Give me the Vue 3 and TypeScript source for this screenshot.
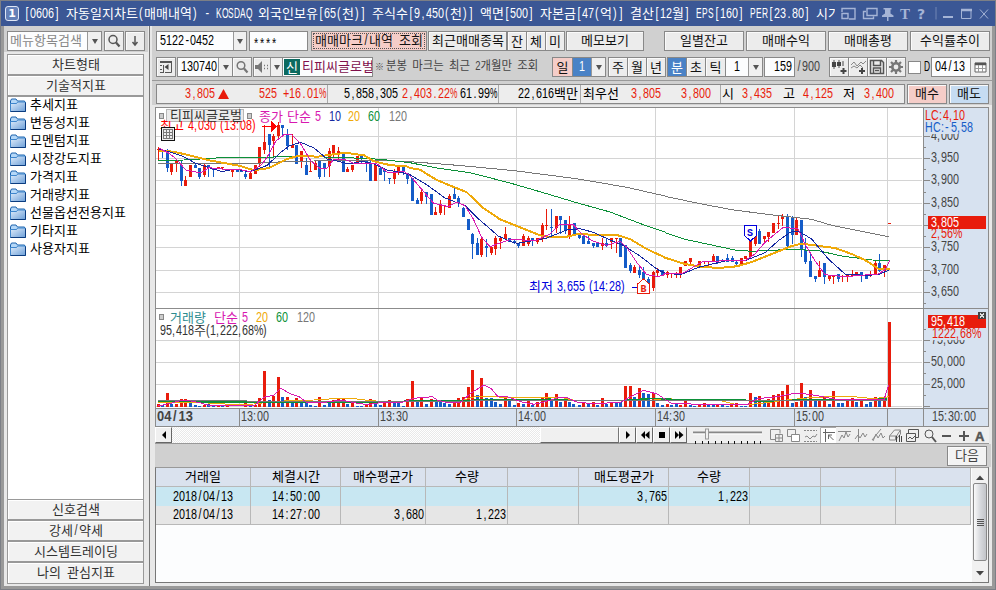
<script setup lang="ts">
import { h } from 'vue'

/* Fixed-cell text: Hangul takes a 12px cell, everything else 6px (4px for punctuation in `p` mode). */
interface CellTextProps { t: string; p?: boolean; z?: number; b?: boolean }
const isHangul = (c: string) => /[\uac00-\ud7a3]/.test(c)
function T(props: CellTextProps) {
  const runs: { k: string; s: string; x: number[] }[] = []
  let pen = 0
  for (const c of props.t) {
    const k = isHangul(c) ? 'ko' : /[A-Z%]/.test(c) ? 'up' : 'nu'
    let run = runs[runs.length - 1]
    if (!run || run.k !== k) {
      run = { k, s: '', x: [] }
      runs.push(run)
    }
    run.s += c
    /* narrow punctuation sits in the middle of its cell */
    const inset = props.p ? 0 : /[,.:/\[\]-]/.test(c) ? 1.4 : /[()]/.test(c) ? 1 : 0
    run.x.push(pen + inset)
    pen += k === 'ko' ? 12 : props.p ? (/[,.:() ]/.test(c) ? 4 : c === '%' ? 9 : /[CH]/.test(c) ? 8 : 6) : 6
  }
  const z = props.z ?? 1
  const squeeze: Record<string, number> = { ko: 1, nu: 0.77, up: props.p ? 0.76 : 0.6 }
  return h('svg', { class: 'tx', width: Math.ceil(pen * z), height: 16 }, [
    h('g', { transform: `scale(${z} ${z === 1 ? 1 : 0.95})` }, runs.map(r =>
      h('text', {
        class: r.k,
        y: 12,
        'xml:space': 'preserve',
        'font-weight': props.b ? 700 : 400,
        transform: `scale(${squeeze[r.k]} 1)`,
        x: r.x.map(v => (v / squeeze[r.k]).toFixed(2)).join(' '),
      }, r.s))),
  ])
}
T.props = { t: String, p: Boolean, z: Number, b: Boolean }

const folders = ['추세지표', '변동성지표', '모멘텀지표', '시장강도지표', '가격지표', '거래량지표', '선물옵션전용지표', '기타지표', '사용자지표']
const bottomMenus = ['신호검색', '강세/약세', '시스템트레이딩', '나의 관심지표']

const quote: { t: string; c?: string }[] = [
  { t: '3,805', c: 'red' }, { t: '▲', c: 'red up-mark' }, { t: '525', c: 'red' }, { t: '+16.01%', c: 'red' }, { t: '', c: 'sep' },
  { t: '5,858,305' }, { t: '2,403.22%', c: 'red' }, { t: '61.99%' }, { t: '', c: 'sep' },
  { t: '22,616백만' }, { t: '', c: 'sep' }, { t: '최우선' }, { t: '3,805', c: 'red' }, { t: '3,800', c: 'red' }, { t: '', c: 'sep' },
  { t: '시' }, { t: '3,435', c: 'red' }, { t: '고' }, { t: '4,125', c: 'red' }, { t: '저' }, { t: '3,400', c: 'red' },
]

/* Candles: x,high,bodyTop,bodyBottom,low,direction in third-pixels, one block per session segment. */
const segA = '14,129,135,137,169,r 26,134,137,143,163,b 40,134,140,191,204,b 53,177,177,203,213,r 67,167,167,181,205,r 82,169,183,230,245,b 95,217,228,245,245,r 109,183,183,218,218,r 125,177,183,191,191,b 137,191,193,218,225,b 152,181,182,213,218,r 163,182,182,191,218,b 178,196,196,198,219,b 194,188,189,196,196,r 206,190,190,193,196,r 236,194,194,203,219,r 250,196,196,203,203,b 262,202,202,204,204,b 274,201,209,218,224,b 290,205,208,225,225,r 304,182,184,211,211,r 317,128,129,180,190,r 331,62,114,138,151,r 346,89,91,124,191,b 358,89,96,110,158,r 373,53,62,97,103,r 385,62,63,72,98,b 400,75,90,126,137,b 415,89,124,132,132,r 427,123,123,180,180,b 442,141,142,171,192,r 457,162,183,213,213,b 470,174,201,203,203,r 484,168,178,197,197,r 496,167,168,219,224,b 511,177,177,191,220,b 526,132,141,185,219,r 538,122,123,152,163,r 553,130,141,153,171,r 568,150,150,204,204,b 580,189,195,204,204,r 595,182,183,197,204,r 610,156,156,180,180,r 622,150,150,166,180,b 637,168,171,180,205,b 650,170,177,230,230,b 664,182,182,230,230,r 679,190,191,212,213,b 691,195,195,204,230,b 706,222,222,225,240,b 721,195,201,225,240,r 733,190,190,200,213,r 748,189,189,203,212,b 760,206,207,224,240,b 775,222,222,291,291,b'
const segB = '22,282,289,299,299,b 35,256,263,291,299,r 49,264,264,280,299,b 64,270,270,332,332,b 76,309,323,332,332,r 91,288,301,328,332,r 103,303,303,305,332,r 118,270,276,311,312,r 133,249,270,284,284,b 145,276,282,298,310,b 160,309,311,340,340,b 175,345,345,378,378,b 187,387,390,420,465,b 202,402,417,453,453,b 214,397,404,453,459,r 229,405,426,431,459,b 244,429,430,447,452,r 256,397,402,435,453,r 271,397,402,411,435,r 286,368,390,405,405,r 298,402,402,414,414,b 313,408,411,417,420,b 325,417,418,426,431,b 340,390,396,426,426,r 355,396,402,420,426,r 367,402,402,412,426,b 382,402,402,413,419,r 397,357,363,405,413,r 409,315,363,366,378,r 424,315,369,371,398,b 439,336,336,372,386,r 452,336,336,349,389,b 466,348,348,378,390,b 478,336,360,398,405,r 493,357,357,390,390,b 508,390,390,402,404,b 520,396,396,419,419,b 535,396,411,420,420,b 550,417,417,425,432,b 562,417,417,430,430,b 577,402,416,426,438,r 589,402,416,425,430,b 604,402,402,413,435,r 619,402,403,406,447,r 631,402,402,458,458,b 646,423,423,491,491,b 661,477,483,501,506,b 673,483,489,506,506,r 688,486,498,512,522,b 700,490,504,540,540,b 715,520,525,540,540,b 730,500,504,551,560,r 742,492,498,507,515,r 757,498,498,512,512,b 772,500,503,512,522,r'
const segC = '20,506,507,510,522,r 34,505,506,509,523,r 46,489,489,507,522,r 61,471,471,485,485,r 76,462,462,473,480,r 89,482,482,486,486,b 103,471,471,485,485,r 117,471,472,475,480,r 130,472,472,475,485,r 145,450,456,471,471,r 157,456,456,473,480,b 172,465,468,473,473,b 187,450,462,473,473,b 201,457,462,473,473,b 215,467,473,480,490,b 229,462,462,485,485,r 241,456,457,465,465,r 257,411,411,459,465,r 271,397,397,421,425,r 283,375,382,420,420,b 298,396,396,405,415,r 310,383,383,398,413,r 325,357,357,388,388,r 340,336,357,360,375,r 352,330,336,345,367,r 367,330,336,426,437,b 382,336,341,392,419,b 395,341,347,392,392,r 409,347,347,437,458,b 421,402,437,473,480,b 436,446,471,519,519,b 451,516,516,525,533,b 463,471,498,518,518,r 478,477,477,518,540,b 493,512,516,525,530,r 505,512,512,518,540,r 520,510,510,525,533,b 532,513,516,519,535,r 547,513,513,518,533,r 562,498,512,516,516,r 574,504,504,513,516,r 589,504,504,516,535,b 604,512,512,525,525,b 617,500,509,515,519,r 631,471,477,510,510,r 643,450,477,501,505,b 658,482,482,501,519,r 673,357,357,360,360,r'

interface Candle { x: number; hi: number; lo: number; top: number; ht: number; c: string }
function parseCandles(src: string, ox: number): Candle[] {
  return src.split(' ').map(s => {
    const f = s.split(',')
    const n = f.slice(0, 5).map(Number)
    const y = (v: number) => Math.round(104 + v / 3)
    return { x: Math.floor(ox + n[0] / 3), hi: y(n[1]), lo: y(n[4]), top: y(n[2]), ht: Math.max(1, y(n[3]) - y(n[2])), c: f[5] }
  })
}
const candles = [...parseCandles(segA, 154), ...parseCandles(segB, 410), ...parseCandles(segC, 665)]

const volA = '14,312r 26,314b 40,279r 53,311b 67,311r 82,297r 95,297r 109,309b 124,315b 137,318b 152,315r 163,312b 178,315b 194,317r 206,317b 220,318r 274,310r 290,316b 304,316r 317,294r 331,213r 346,300b 358,288r 373,231r 385,291b 400,291r 415,308b 427,294r 442,303b 457,309b 470,315b 484,318b 496,291r 511,315b 526,309b 538,300r 553,297r 568,296r 580,312b 595,308r 610,318b 622,318b 637,315r 650,297r 664,309b 679,315b 691,310r 706,300r 721,308b 733,308b 748,318b 760,297r 775,243r 790,305b 802,291r 817,312b 832,297r 847,300b 859,305b 871,309b 886,312b 901,309r 913,294r 928,291r 943,261r 955,210r 970,285b 982,234r 997,294b 1012,294b 1025,306b 1040,312b 1054,288r 1066,303b 1081,315b 1093,309r 1108,312b 1123,302r 1135,315b 1150,306r 1165,294r 1177,279r 1192,297b 1207,282r 1219,305b 1234,291r 1247,305b 1259,312b'
const volB = '16,315b 29,308r 43,310b 58,306r 70,315b 85,294r 97,312b 112,308r 127,308b 139,305b 154,258r 169,258r 181,291b 196,264r 208,279b 223,282b 238,279r 250,309b 265,315b 280,312r 292,315b 307,312b 319,315r 334,303r 349,315b 362,318b 376,315r 391,309r 403,315b 418,316b 431,313r 446,316b 460,318b 473,312r 487,310r 502,318b 514,318b 529,279r 544,291b 556,288r 571,303b 583,297r 598,285r 613,282r 625,273r 640,255r 655,309b 667,306r 682,249r 694,291b 709,270r 724,303b 736,297r 751,288r 766,312b 778,273r 793,309b 805,309b 820,303r 835,294r 847,306b 862,303r 877,312b 889,306b 904,291r 916,302b 931,300r 946,66r'
function parseVolume(src: string, ox: number) {
  return src.split(' ').map(s => {
    const [a, b] = s.split(',')
    const y = Math.round(300 + parseInt(b) / 3)
    return { x: Math.floor(ox + Number(a) / 3) - 1, y, ht: 407 - y, c: b.slice(-1) }
  })
}
const volumes = [...parseVolume(volA, 154), ...parseVolume(volB, 574)]

function line(oy: number, ...parts: [number, string][]): string {
  return parts.map(([ox, s]) => s.split(' ').map(p => {
    const [a, b] = p.split(',').map(Number)
    return `${(ox + a / 3).toFixed(1)},${(oy + b / 3).toFixed(1)}`
  }).join(' ')).join(' ')
}
const priceLines = [
  { c: 'ma120', d: line(104, [154, '12,178 60,180 90,178 300,178 390,173 480,171 640,169 760,172'], [410, '0,173 120,182 220,191 320,201 500,224 650,250 765,276'], [665, '0,277 100,298 200,317 330,334 440,346 500,364 600,384 672,398']) },
  { c: 'ma60', d: line(104, [154, '12,169 90,168 200,161 300,162 400,157 480,158 600,162 680,166 730,172'], [410, '0,176 80,192 180,206 300,237 400,266 500,296 600,324 700,362 765,384'], [665, '0,386 60,406 210,438 260,442 380,436 460,440 530,456 620,468 672,469']) },
  { c: 'ma20', d: line(104, [154, '14,140 60,143 110,155 165,169 255,185 300,199 345,192 400,165 435,155 490,158 530,152 575,146 630,154 660,172 710,184 755,186'], [410, '0,192 30,197 80,228 170,265 220,312 270,346 330,370 390,394 410,398 470,398 500,391 620,393 660,405 710,435 760,458'], [665, '0,461 60,480 110,488 160,492 215,487 260,474 320,450 380,426 410,419 510,432 560,450 600,468 640,494 675,494']) },
  { c: 'ma10', d: line(104, [154, '14,135 50,145 85,156 125,178 165,191 205,203 240,195 285,203 305,197 340,184 380,145 405,126 440,115 480,132 520,165 545,170 585,180 625,172 660,180 700,198 740,205'], [410, '0,212 50,242 105,282 165,305 200,340 265,396 300,412 320,418 370,410 410,402 470,378 510,374 550,385 600,408 640,424 690,456 740,495 765,508'], [665, '0,509 50,511 100,490 180,471 240,470 300,446 340,410 380,382 405,384 440,405 490,465 540,510 600,514 640,512 672,498']) },
  { c: 'ma5', d: line(104, [154, '14,132 45,148 67,165 95,198 140,207 165,191 205,195 250,195 290,203 325,180 345,150 365,112 390,92 410,90 440,120 470,170 500,195 520,192 540,165 570,165 600,178 640,178 670,180 700,205 725,205 750,202'], [410, '0,215 30,250 70,297 115,308 140,294 165,305 190,345 215,400 240,428 275,415 300,407 340,408 380,408 420,390 450,360 490,362 515,390 550,412 590,424 630,412 650,430 680,475 710,512 740,517 760,515'], [665, '0,507 50,510 110,474 180,470 240,470 270,450 300,415 355,370 400,375 420,420 450,470 480,512 540,518 600,513 640,510 660,497 674,469']) },
]
const volumeLines = [
  { c: 'v20', d: line(300, [154, '12,309 140,307 170,310 230,313 300,312 330,308 400,302 480,300 540,296 600,296 640,301 700,306 770,304 860,304 920,302 960,291 1010,289 1060,293 1220,292'], [574, '0,301 240,300 290,296 300,299 440,302 480,312 520,314 570,309 640,300 700,294 760,290 850,291 900,296 945,290']) },
  { c: 'v60', d: line(300, [154, '12,304 230,306 400,307 690,307 770,303 940,303 980,299 1190,298'], [574, '0,302 155,301 240,295 290,298 480,299 540,302 600,302 700,300 850,300 940,297']) },
  { c: 'ma120', d: line(300, [154, '12,302 280,303 330,304 900,305 1000,301'], [574, '0,303 160,301 940,301']) },
  { c: 'ma5', d: line(300, [154, '12,318 50,310 85,300 110,303 140,309 165,316 300,318 330,292 360,285 380,265 410,282 435,290 460,308 500,309 560,300 600,308 640,314 690,306 740,308 780,295 835,290 850,300 880,308 920,306 950,280 990,255 1012,266 1030,288 1060,290 1100,305 1140,313 1170,306 1210,294 1240,293'], [574, '10,307 60,311 140,307 170,290 208,271 250,282 290,309 330,311 420,315 480,314 520,314 550,296 610,290 650,282 690,281 730,287 780,297 850,300 930,299 944,255']) },
]
const gridY = [136.5, 158.5, 180.5, 203.5, 225.5, 247.5, 270.5, 292.5]
const gridX = [239.5, 378.5, 516.5, 655.5, 794.5, 887.5]
const minorY = [147.5, 169.5, 192.5, 214.5, 236.5, 259.5, 281.5, 303.5, 329.5, 351.5, 373.5, 395.5]
const priceLabels = [
  { t: '4,000', y: 127.5 }, { t: '3,950', y: 150 }, { t: '3,900', y: 172 }, { t: '3,850', y: 195 },
  { t: '3,750', y: 239 }, { t: '3,700', y: 262 }, { t: '3,650', y: 284 }, { t: '75,000', y: 332 }, { t: '50,000', y: 354 }, { t: '25,000', y: 376 },
]
const timeLabels = [
  { t: '13:00', x: 241 }, { t: '13:30', x: 380 }, { t: '14:00', x: 518 }, { t: '14:30', x: 657 }, { t: '15:00', x: 796 }, { t: '15:30:00', x: 932 },
]
const tableHead = ['거래일', '체결시간', '매수평균가', '수량', '', '매도평균가', '수량', '', '', '']
const tableRows = [
  ['2018/04/13', '14:50:00', '', '', '', '3,765', '1,223', '', '', ''],
  ['2018/04/13', '14:27:00', '3,680', '1,223', '', '', '', '', '', ''],
]
</script>

<template>
  <div class="window">
    <header class="title">
      <span class="badge">1</span>
      <div class="caption"><T t="[0606] 자동일지차트(매매내역) - KOSDAQ 외국인보유[65(천)] 주식수[9,450(천)] 액면[500] 자본금[47(억)] 결산[12월] EPS[160] PER[23.80] 시가" /></div>
      <svg class="win-icons" width="156" height="26" viewBox="838 1 156 26">
        <g fill="none" stroke="#a5b4d6" stroke-width="1.4">
          <path d="M842 12V8.500h13v10.500h-6M842 13.500h6v5h-6z" />
          <path d="M867 8.500h10v7h-10zM866 11.500h-2.500v7h10v-2" />
          <path d="M936 7v12.500" stroke="#7387b4" stroke-width="1" />
          <path d="M943 17h10" stroke-width="2" />
          <path d="M961.500 10v8.500h9.500V10" stroke-width="1" /><path d="M961 10h11" stroke-width="2.500" />
          <path d="M980 9.500l8 9M988 9.500l-8 9" stroke-width="1" />
        </g>
        <path d="M883.500 8h8v1.500h-1v4l3 2v1.500h-5v4h-1.500v-4h-5v-1.500l3-2v-4h-1.500z" fill="#a5b4d6" />
        <text x="900" y="19" class="glyph-t">T</text>
        <text x="917" y="19" class="glyph-q">?</text>
      </svg>
    </header>

    <div class="body">
      <aside class="side">
        <div class="find">
          <div class="field find-field"><T t="메뉴항목검색" class="muted" /><span class="drop"></span></div>
          <button class="btn sq"><svg width="14" height="14" viewBox="0 0 14 14"><circle cx="6" cy="5.500" r="4" class="ln" /><path d="M9 8.500l3.500 4" class="ln w2" /></svg></button>
          <button class="btn sq"><svg width="10" height="12" viewBox="0 0 10 12"><path d="M5 1v9M2.500 7L5 10l2.500-3" class="ln" /></svg></button>
        </div>
        <div class="acc">
          <div class="acc-head"><T t="차트형태" /></div>
          <div class="acc-head"><T t="기술적지표" /></div>
          <ul class="tree">
            <li v-for="f in folders" :key="f">
              <svg width="16" height="15" viewBox="0 0 16 15">
                <defs><linearGradient id="fold" x1="0" y1="0" x2="1" y2="1"><stop offset="0" stop-color="#e2eefb" /><stop offset="1" stop-color="#6c9fd8" /></linearGradient></defs>
                <path d="M.5 3l1-2h4.500l1.500 2h7v3H.5z" fill="#b5d8f8" stroke="#1c62ac" />
                <path d="M.5 5.500h6l1.200-1.500h7.800v9.500H.5z" fill="url(#fold)" stroke="#3f86cc" />
                <path d="M.5 13.500h15V4.500" fill="none" stroke="#0b3c80" />
              </svg>
              <T :t="f" />
            </li>
          </ul>
          <div v-for="m in bottomMenus" :key="m" class="acc-head"><T :t="m" /></div>
        </div>
      </aside>

      <main class="main">
        <div class="tools">
          <div class="row r1">
            <div class="field acct"><T t="5122-0452" /><span class="drop"></span></div>
            <div class="field pw"><T t="****" class="stars" /></div>
            <button class="btn pink dotted"><T t="매매마크/내역 조회" /></button>
            <button class="btn recent"><T t="최근매매종목" /></button>
            <button class="btn sq">잔</button><button class="btn sq join">체</button><button class="btn sq join">미</button>
            <button class="btn memo"><T t="메모보기" /></button>
            <button class="btn wide first"><T t="일별잔고" /></button>
            <button class="btn wide"><T t="매매수익" /></button>
            <button class="btn wide"><T t="매매총평" /></button>
            <button class="btn wide"><T t="수익률추이" /></button>
          </div>
          <div class="row r2">
            <button class="btn sq"><svg width="14" height="14" viewBox="0 0 14 14"><path d="M1 2h12" stroke="#555" stroke-width="2" /><path d="M12.500 2v10.500H6M4.500 5v8M1 5.500h2M1 9.500h2M1 12.500h3" class="ln thin-line" /><path d="M5.500 7l4-3v6z" fill="#444" /></svg></button>
            <div class="field code"><T t="130740" /><span class="drop"></span></div>
            <button class="btn sq join"><svg width="14" height="14" viewBox="0 0 14 14"><circle cx="6" cy="5.500" r="3.800" class="ln thin" /><path d="M9 8.500l3.500 4" class="ln w2 thin" /></svg></button>
            <button class="btn speaker"><svg width="16" height="14" viewBox="0 0 16 14"><path d="M1 5h3l4-4v12L4 9H1z" fill="#777" /><path d="M10 5.500h1M13 5.500h1M10 8.500h1M13 8.500h1" stroke="#777" stroke-width="1.500" /></svg><span class="drop"></span></button>
            <div class="field stock"><span class="tag">신</span><div class="clip"><T t="티피씨글로벌" /></div></div>
            <div class="note"><span class="ref">※</span><T t="분봉 마크는 최근 2개월만 조회" :z="0.875" /></div>
            <button class="btn day pink">일</button>
            <div class="field one join"><span class="sel"><T t="1" /></span><span class="drop"></span></div>
            <button class="btn sq gap2">주</button><button class="btn sq join">월</button><button class="btn sq join">년</button>
            <button class="btn sq on gap1">분</button><button class="btn sq join">초</button><button class="btn sq21 join">틱</button>
            <div class="field tick join"><T t="1" /><span class="drop"></span></div>
            <div class="field cnt"><T t="159" /></div>
            <div class="total"><T t="/900" /></div>
            <button class="btn sq"><svg width="16" height="16" viewBox="0 0 16 16"><path d="M3 1v9M8 1v8M12 2v5" stroke="#555" /><path d="M1 3h4v5H1zM6 3h4v4H6z" fill="#444" /><path d="M11 3h2v4h-2z" fill="#999" /><path d="M12.500 9v6M9.500 12h6" stroke="#444" stroke-width="2" /></svg></button>
            <button class="btn sq join"><svg width="16" height="16" viewBox="0 0 16 16"><path d="M1 6l3-3 3 4 4-4 2 2 3-3M1 9l3-2 3 2 3-3 3 3" stroke="#888" fill="none" /><path d="M12 9v6M9 12h6" stroke="#444" stroke-width="2" /></svg></button>
            <button class="btn sq join"><svg width="16" height="16" viewBox="0 0 16 16"><path d="M1.500 1.500h11l2 2v11h-13zM4.500 1.500v5h7v-5M4.500 14v-5h7v5M6 11.500h4" class="ln" /></svg></button>
            <button class="btn sq join"><svg width="14" height="14" viewBox="0 0 14 14"><circle cx="7" cy="7" r="3.700" fill="none" stroke="#777" stroke-width="2.600" /><path d="M7 0v3M7 11v3M0 7h3M11 7h3M2 2l2 2M10 10l2 2M12 2l-2 2M4 10l-2 2" stroke="#777" stroke-width="2.200" /></svg></button>
            <span class="check"></span><T t="D" class="dee" />
            <div class="field date"><T t="04/13" /><span class="cal"><svg width="13" height="11" viewBox="0 0 13 11"><path d="M1 1h11v9H1z" fill="#fff" stroke="#666" /><path d="M1 2h11" stroke="#555" stroke-width="2.500" /><path d="M1 6.500h11M4.500 3v7M8.500 3v7" stroke="#999" /></svg></span></div>
          </div>
          <div class="row r3">
            <div class="quote">
              <span v-for="(q, i) in quote" :key="i" :class="q.c">
                <svg v-if="q.t === '▲'" width="11" height="10" viewBox="0 0 11 10"><path d="M5.500 0L11 10H0z" fill="#e81c0c" /></svg>
                <T v-else-if="q.t" :t="q.t" />
              </span>
            </div>
            <button class="btn buy"><T t="매수" /></button>
            <button class="btn sell"><T t="매도" /></button>
          </div>
        </div>

        <svg class="chart" width="834" height="320" viewBox="155 107 834 320">
          <rect x="155" y="107" width="834" height="320" fill="#fff" />
          <rect x="923" y="107" width="66" height="320" class="axis-bg" />
          <rect x="155" y="408" width="834" height="19" class="axis-bg" />
          <path v-for="y in gridY" :key="y" :d="`M156 ${y}H922`" class="grid" />
          <path v-for="y in [340.5, 362.5, 384.5, 406.500]" :key="y" :d="`M156 ${y}H922`" class="grid" />
          <path v-for="x in gridX" :key="x" :d="`M${x} 108V407`" class="grid" />

          <g v-for="(k, i) in candles" :key="i" :class="k.c">
            <rect :x="k.x" :y="k.hi" width="1" :height="Math.max(1, k.lo - k.hi)" />
            <rect :x="k.x - 1" :y="k.top" width="3" :height="k.ht" />
          </g>
          <polyline v-for="(l, i) in priceLines" :key="'p' + i" :points="l.d" :class="l.c" />
          <rect v-for="(v, i) in volumes" :key="'v' + i" :x="v.x" :y="v.y" width="3" :height="v.ht" :class="v.c" />
          <polyline v-for="(l, i) in volumeLines" :key="'w' + i" :points="l.d" :class="l.c" />

          <path d="M262 126.500h9" stroke="#f00" /><path d="M271 121l6 5.500-6 5.500z" fill="#f00" />
          <rect x="166.500" y="109.500" width="77" height="12" fill="#ebebeb" stroke="#b8b8b8" />
          <T t="최고 4,030 (13:08)" p x="160" y="117.500" class="pure" />
          <rect x="167" y="110" width="76" height="11" fill="#ebebeb" />
          <T t="티피씨글로벌" p x="170" y="108" class="c-ink" />
          <rect x="159.500" y="113.500" width="4" height="5" class="knob" />
          <rect x="247.500" y="113.500" width="4" height="5" class="knob" />
          <T t="종가 단순 5" p x="259" y="109" class="c-mag" />
          <T t="10" x="329" y="109" class="c-navy" />
          <T t="20" x="348" y="109" class="c-gold" />
          <T t="60" x="368" y="109" class="c-green" />
          <T t="120" x="389" y="109" class="c-gray" />
          <rect x="161.500" y="127.500" width="13" height="13" fill="#ececec" stroke="#111" />
          <path d="M163.500 129.500h9v9h-9zM163.500 132.500h9M163.500 135.500h9M166.500 129.500v9M169.500 129.500v9" fill="none" stroke="#777" />

          <T t="최저 3,655 (14:28)" p x="529" y="279" class="c-blue" />
          <path d="M632 287.500h5" stroke="#00d" />
          <path d="M637.500 293.500v-9.500l6-5 6 5v9.500z" class="buy-mark" />
          <text x="640.500" y="292" class="mark c-red">B</text>
          <path d="M744.500 225.500h12v10l-6 5.500-6-5.500z" class="sell-mark" />
          <text x="747" y="236" class="mark c-blue">S</text>

          <rect x="159.500" y="314.500" width="4" height="5" class="knob" />
          <T t="거래량" x="170" y="310" class="c-teal" />
          <T t="단순" x="214" y="310" class="c-mag" />
          <T t="5" x="242" y="310" class="c-mag" />
          <T t="20" x="256" y="310" class="c-gold" />
          <T t="60" x="276" y="310" class="c-green" />
          <T t="120" x="297" y="310" class="c-gray" />
          <T t="95,418주(1,222,68%)" p x="160" y="323" class="c-ink" />

          <path v-for="y in minorY" :key="'m' + y" :d="`M924 ${y}h2`" class="tick-line" />
          <path v-for="y in [...gridY, 340.5, 362.5, 384.5, 406.500]" :key="'t' + y" :d="`M924 ${y}h6`" class="tick-line" />
          <T v-for="l in priceLabels" :key="l.t" :t="l.t" p x="931" :y="l.y" class="c-axis" />
          <rect x="924" y="108" width="63" height="26" class="axis-bg" />
          <T t="LC:4,10" p x="925" y="108" class="c-red" />
          <T t="HC:-5,58" p x="925" y="120" class="c-quote" />
          <T t="2,56%" p x="931" y="226" class="c-red" />
          <rect x="928" y="216" width="58" height="13" class="r" />
          <T t="3,805" p x="931" y="215" class="c-white" />
          <rect x="924" y="328" width="63" height="12" class="axis-bg" />
          <path d="M924 329.500h2" class="tick-line" />
          <T t="1222,68%" p x="932" y="326" class="c-red" />
          <rect x="928" y="315" width="58" height="13" class="r" />
          <T t="95,418" p x="931" y="313.500" class="c-white" />
          <rect x="978" y="312" width="8" height="7" fill="#444" /><path d="M980 313.500l4 4M984 313.500l-4 4" stroke="#ddd" />

          <path d="M155 308.500H988M155 408H988M923.500 107V426" class="frame" />
          <path v-for="x in gridX" :key="'x' + x" :d="`M${x} 408V426`" class="frame" />
          <rect x="155.500" y="107.500" width="833" height="319" class="frame" />
          <T t="04/13" b x="157" y="409" class="c-axis big-date" />
          <T v-for="l in timeLabels" :key="l.t" :t="l.t" p :x="l.x" y="409" class="c-axis" />
        </svg>

        <div class="player">
          <div class="hbar">
            <span class="hbtn"><svg width="6" height="8" viewBox="0 0 6 8"><path d="M5 0v8L1 4z" /></svg></span>
            <span class="track"></span>
            <span class="thumb"></span>
            <span class="hbtn"><svg width="6" height="8" viewBox="0 0 6 8"><path d="M1 0v8l4-4z" /></svg></span>
            <span class="hbtn"><svg width="10" height="8" viewBox="0 0 10 8"><path d="M5 0v8L1 4zM9.500 0v8L5 4z" /></svg></span>
            <span class="hbtn"><svg width="6" height="6" viewBox="0 0 6 6"><path d="M0 0h6v6H0z" /></svg></span>
            <span class="hbtn"><svg width="10" height="8" viewBox="0 0 10 8"><path d="M1 0v8l4-4zM5 0v8l4.500-4z" /></svg></span>
          </div>
          <svg class="strip" width="301" height="17" viewBox="687 427 301 17">
            <path d="M693 432.500h69" stroke="#888" stroke-width="2" /><path d="M693 434h69" stroke="#fff" />
            <rect x="705.500" y="429" width="3" height="10" fill="#f2f2f2" stroke="#999" />
            <path d="M695.500 441v3M702.500 441v3M708.500 441v3M715.500 441v3M721.500 441v3M728.500 441v3M734.500 441v3M741.500 441v3M747.500 441v3M754.500 441v3M760.500 441v3" stroke="#111" />
            <g class="ico">
              <path d="M775 439.500h-4.500v-10h9.500v4M775.500 434.500h7v7h-7zM779 434.500v7M775.500 438h7" />
              <path d="M787.500 429.500h8v7h-8z" /><path d="M791.500 434.500h8v7h-8z" fill="#fff" />
              <path d="M804 430.500h13M804 441.500h13" stroke-dasharray="2 1" /><path d="M805 437l2-1 3 3 3-3 2 1 2-3" />
              <rect x="820" y="427" width="16" height="16" fill="#fff" stroke="none" /><path d="M820.500 443v-15.500h15.500" stroke="#aaa" />
              <path d="M825.500 429v13M823 432.500h12M828 435h4M828.500 435v4M828.500 435l5 5" stroke="#666" />
              <path d="M838 431.500h13M839 441l3-6 2 3 2-6 2 5 2-3" />
              <path d="M858.500 429v13M855 439l3-4 2 3 3-5 2 4 2-3" />
              <path d="M872 440l9-11M873 441l3-7 2 4 3-5 2 5 2-2" />
              <path d="M889.500 436l5-6h6l-4 6zM889.500 436v4h6v-4M895.500 440l5-6v-4" /><path d="M896.500 436v6M899.500 435v7M901.500 436v6" stroke="#444" />
              <path d="M908.500 433v-3.500h10v8h-3M906.500 433.500h9v8h-9zM908 439l2-2 2 2 3-3" stroke="#555" />
              <circle cx="929" cy="434" r="4" stroke="#555" /><path d="M932 437l4 5" stroke="#555" stroke-width="2" />
              <path d="M942 436h9M959 436h10M964 431v10" stroke="#555" stroke-width="2" />
            </g>
            <text x="975" y="441" class="glyph-a">A</text>
          </svg>
        </div>

        <div class="nextbar"><button class="btn next"><T t="다음" /></button></div>

        <div class="table">
          <div class="grid-rows">
            <div class="tr head"><span v-for="(c, i) in tableHead" :key="i"><T v-if="c" :t="c" /></span></div>
            <div v-for="(r, ri) in tableRows" :key="ri" class="tr"><span v-for="(c, i) in r" :key="i" :class="{ num: i > 1 }"><T v-if="c" :t="c" /></span></div>
          </div>
          <div class="vbar">
            <svg width="8" height="5" viewBox="0 0 8 5"><path d="M0 5l4-4.500L8 5z" fill="#444" /></svg>
            <span class="vthumb"><i></i><i></i><i></i><i></i></span>
            <svg width="8" height="5" viewBox="0 0 8 5"><path d="M0 0l4 4.500L8 0z" fill="#444" /></svg>
          </div>
        </div>
      </main>
    </div>
  </div>
</template>

<style>
body { overflow: hidden; }
.tx { display: block; flex: none; overflow: visible; fill: currentColor; }
.tx text { white-space: pre; font-family: "Liberation Sans", Arial, sans-serif; font-size: 14px; }
.tx .ko { font-family: "Noto Sans CJK KR", sans-serif; font-size: 13px; }
</style>

<style scoped>
.window { box-sizing: border-box; width: 996px; height: 590px; display: flex; flex-direction: column; border: 1px solid #7c7f86; background: #999; font-family: "Noto Sans CJK KR", sans-serif; font-size: 13px; color: #000; }
.title { height: 25px; display: flex; align-items: center; background: #3b5795; color: #fff; }
.badge { box-sizing: border-box; width: 14px; height: 15px; margin-left: 4px; border: 1px solid #dfe6f5; border-radius: 3px; background: #6480b8; font: bold 11px/13px "DejaVu Sans", sans-serif; text-align: center; }
.caption { width: 811px; margin-left: 5px; margin-right: 3px; overflow: hidden; }
.win-icons { flex: none; }
.glyph-t { font: bold 15px "Liberation Serif", serif; fill: #a5b4d6; }
.glyph-q { font: bold 14px "DejaVu Sans", sans-serif; fill: #a5b4d6; }
.glyph-a { font: bold 13px "Liberation Sans", sans-serif; fill: #555; stroke: #555; stroke-width: 0.5; }
.body { flex: 1; display: flex; margin: 0 3px 3px; background: #e8e8e8; min-height: 0; }
.side { box-sizing: border-box; width: 145px; padding-right: 2px; border-right: 0; }
.find { display: flex; gap: 1px; padding: 5px 0 1px 3px; background: #d0d0d0; height: 20px; width: 141px; }
.field { box-sizing: border-box; height: 20px; display: flex; align-items: center; background: #fcfdfe; border: 1px solid #888; flex: none; }
.find-field { width: 95px; margin-right: 1px; padding-left: 2px; }
.muted { color: #888; }
.drop { margin-left: auto; box-sizing: border-box; width: 14px; height: 18px; flex: none; border-left: 1px solid #999; background: #f0f0f0; display: flex; align-items: center; justify-content: center; }
.drop::before { content: ""; border: 4px solid transparent; border-top: 5px solid #555; border-bottom: 0; border-left-width: 3.5px; border-right-width: 3.5px; }
.btn { box-sizing: border-box; height: 20px; flex: none; padding: 0; border: 1px solid #888; border-radius: 0; background: #ececec; box-shadow: inset 1px 1px #fafafa; display: flex; align-items: center; justify-content: center; font: 13px/16px "Noto Sans CJK KR", sans-serif; color: #111; }
.sq { width: 20px; }
.sq21 { width: 21px; }
.join { margin-left: -1px; }
.ln { fill: none; stroke: #555; stroke-width: 1.5; }
.w2 { stroke-width: 2.2; }
.thin { stroke: #777; }
.thin-line { stroke-width: 1; }
.stars { margin-top: 5px; }
.acc { box-sizing: border-box; margin: 2px 0 0 3px; width: 137px; height: 530px; display: flex; flex-direction: column; border: 1px solid #999; background: #fff; }
.acc-head { box-sizing: border-box; height: 21px; flex: none; display: flex; justify-content: center; align-items: center; color: #333; background: #f2f2f2; border-bottom: 2px solid #999; box-shadow: inset 1px 1px #fff; }
.acc-head:last-child { border-bottom: 0; height: 20px; }
.tree { flex: 1; margin: 0; padding: 0 0 0 2px; list-style: none; border-bottom: 1px solid #999; }
.tree li { display: flex; align-items: center; gap: 4px; height: 18px; position: relative; top: -1px; }
.main { flex: 1; min-width: 0; border-left: 1px solid #777; padding-left: 2px; display: flex; flex-direction: column; }
.tools { height: 79px; background: #d0d0d0; box-sizing: border-box; padding: 5px 0 0 4px; }
.row { display: flex; align-items: center; height: 20px; }
.acct { width: 91px; padding-left: 3px; }
.acct .drop { width: 13px; }
.pw { width: 59px; margin-left: 2px; padding-left: 4px; }
.pink { background: #f5cdc8; box-shadow: none; }
.dotted { width: 116px; margin-left: 3px; outline: 1px dotted #555; outline-offset: -3px; }
.recent { width: 79px; margin: 0 0 0 1px; }
.memo { width: 78px; margin-left: 1px; }
.wide { width: 80px; margin-left: 2px; }
.first { margin-left: 20px; }
.r2 { margin-top: 6px; padding-bottom: 3px; border-bottom: 1px solid #999; margin-left: -4px; padding-left: 4px; }
.code { width: 56px; margin-left: 1px; padding-left: 3px; }
.speaker { width: 30px; margin-left: 1px; }
.speaker .drop { width: 12px; }
.stock { width: 91px; margin-left: -1px; padding-left: 1px; color: #80104c; }
.tag { width: 16px; height: 16px; margin-right: 2px; background: #0b6a60; color: #fff; line-height: 16px; text-align: center; }
.clip { overflow: hidden; flex: 1; }
.note { width: 177px; padding-left: 2px; box-sizing: content-box; display: flex; align-items: center; color: #444; }
.ref { width: 11px; font-size: 9px; font-weight: bold; line-height: 16px; }
.day { width: 21px; }
.one { width: 34px; }
.sel { display: flex; width: 18px; height: 18px; align-items: center; justify-content: center; background: #4a82c6; color: #fff; }
.gap2 { margin-left: 2px; }
.gap1 { margin-left: 1px; }
.on { background: #4a82c6; color: #fff; box-shadow: none; }
.tick { width: 38px; padding-left: 8px; }
.cnt { width: 31px; margin-left: 1px; padding-left: 9px; }
.total { width: 33px; padding-left: 1px; color: #444; }
.check { box-sizing: border-box; width: 13px; height: 13px; margin-left: 2px; border: 1px solid #888; background: #fff; flex: none; }
.dee { margin: 0 1px 0 3px; }
.date { width: 59px; padding-left: 3px; }
.cal { margin-left: auto; width: 18px; height: 18px; display: flex; align-items: center; justify-content: center; background: #eee; border-left: 1px solid #999; }
.r3 { margin-top: 3px; }
.quote { box-sizing: border-box; width: 749px; height: 20px; border: 1px solid #888; background: #ededed; display: grid; grid-template-columns: 58px 15px 47px 48px 3px 70px 58px 40px 3px 79px 3px 38px 42px 50px 10px 13px 38px 23px 38px 22px 39px; }
.quote span { display: flex; align-items: center; justify-content: flex-end; }
.quote .sep { border-right: 1px solid #aaa; }
.quote .up-mark { padding-right: 1px; }
.red { color: #e81c0c; }
.buy { width: 40px; margin-left: 2px; background: #f5cdc8; }
.sell { width: 40px; margin-left: 2px; background: #c6dcf2; }
.chart { display: block; flex: none; margin: 2px 0 0 3px; shape-rendering: crispEdges; }
.axis-bg { fill: #d7e2f0; }
.grid { stroke: #d4d4d4; }
.frame { stroke: #8c8c8c; fill: none; }
.tick-line { stroke: #888; }
.r { fill: #e81c0c; }
.b { fill: #155cc8; }
polyline { fill: none; stroke-width: 1; }
.ma120 { stroke: #777; }
.ma60 { stroke: #0c9038; }
.ma20 { stroke: #efa90a; stroke-width: 2; }
.ma10 { stroke: #1428a0; }
.ma5 { stroke: #d818b0; }
.v20 { stroke: #efa90a; }
.v60 { stroke: #0c9038; stroke-width: 1.6; }
.knob { fill: #ccc; stroke: #888; }
.c-red { fill: #e81c0c; }
.pure { fill: #f00; }
.c-ink { fill: #333; }
.c-mag { fill: #d818b0; }
.c-navy { fill: #1428a0; }
.c-gold { fill: #efa90a; }
.c-green { fill: #0c9038; }
.c-gray { fill: #777; }
.c-teal { fill: #2c8c90; }
.c-blue { fill: #0000dc; }
.c-quote { fill: #155cc8; }
.c-axis { fill: #444; }
.c-white { fill: #fff; }
.big-date { transform: scaleX(1.2); transform-origin: 157px 0; }
.buy-mark { fill: #fff; stroke: #e81c0c; }
.sell-mark { fill: #fff; stroke: #0000dc; }
.mark { font: bold 10px "Liberation Mono", monospace; }
.player { height: 17px; margin-left: 3px; width: 834px; display: flex; background: #efefef; border-bottom: 1px solid #999; flex: none; box-sizing: border-box; }
.hbar { display: flex; width: 532px; height: 16px; flex: none; }
.hbtn { box-sizing: border-box; width: 17px; height: 16px; display: flex; align-items: center; justify-content: center; background: #f0f0f0; border: 1px solid #fff; border-right-color: #666; border-bottom-color: #666; flex: none; }
.track { flex: 1; background: repeating-conic-gradient(#fff 0 25%, #e9e9e9 0 50%) 0 0 / 2px 2px; }
.thumb { box-sizing: border-box; width: 79px; background: #f0f0f0; border: 1px solid #fff; border-right-color: #777; border-bottom-color: #666; }
.strip { flex: none; }
.ico { fill: none; stroke: #888; }
.nextbar { box-sizing: border-box; height: 23px; flex: none; display: flex; justify-content: flex-end; padding: 2px 4px 0 0; margin-left: 3px; width: 836px; background: #d0d0d0; }
.next { width: 40px; color: #444; background: #f3f3f3; }
.table { box-sizing: border-box; flex: 1; margin: 0 0 3px 3px; width: 834px; border: 1px solid #777; border-top-color: #999; background: #fcfdfe; display: flex; justify-content: space-between; }
.tr { display: grid; grid-template-columns: 95px 90px 85px 82px 71px 90px 81px 71px 75px 75px; height: 19px; background: #c8e7f2; }
.tr span { display: flex; align-items: center; justify-content: center; border-right: 1px solid #b8b8b8; }
.tr .num { justify-content: flex-end; padding-right: 1px; }
.head { background: #dae2ee; }
.head, .tr:last-child { border-bottom: 1px solid #b8b8b8; box-sizing: border-box; }
.tr:last-child { background: #e6e6e6; }
.vbar { width: 16px; display: flex; flex-direction: column; align-items: center; justify-content: space-between; padding: 7px 0 6px; box-sizing: border-box; background: #f1f1f1; }
.vthumb { box-sizing: border-box; width: 14px; height: 78px; border: 1px solid #888; border-radius: 2px; background: linear-gradient(90deg, #fafafa, #d8dade 50%, #c2c4c8); display: flex; flex-direction: column; gap: 1px; align-items: center; justify-content: center; margin-bottom: 7px; }
.vthumb i { width: 7px; height: 1px; background: #555; }
</style>
